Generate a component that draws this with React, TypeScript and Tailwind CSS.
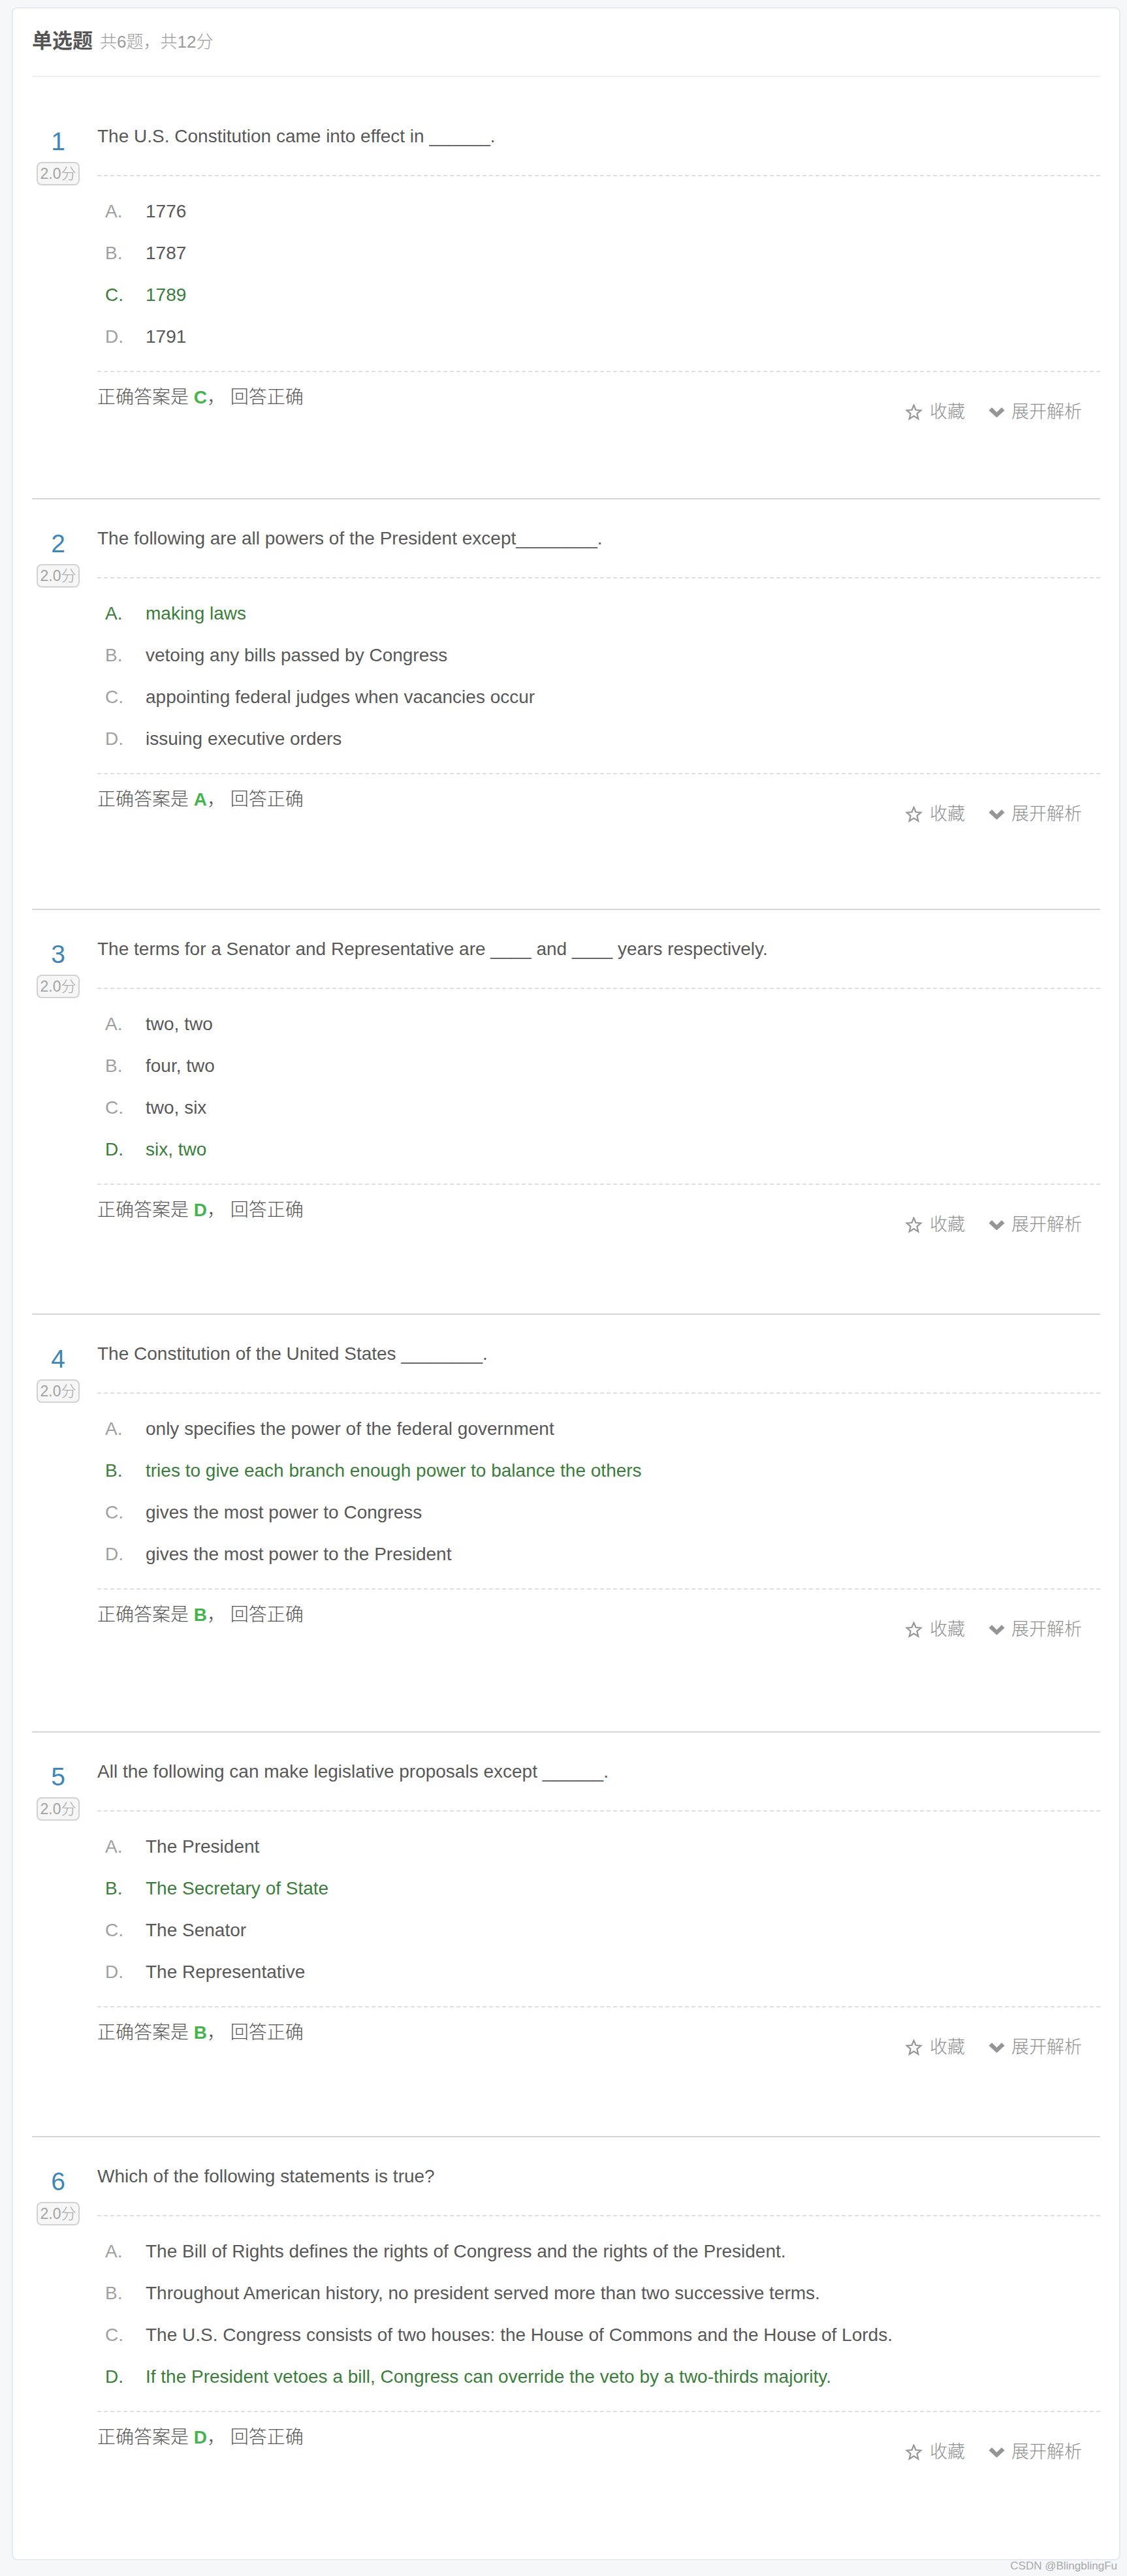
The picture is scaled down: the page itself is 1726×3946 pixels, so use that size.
import React from 'react';

type Question = {
  num: number;
  text: string;
  options: string[];
  correct: number;
  spacing: string;
};

const LETTERS = ['A', 'B', 'C', 'D'];

const questions: Question[] = [
  {
    num: 1,
    text: 'The U.S. Constitution came into effect in ______.',
    options: ['1776', '1787', '1789', '1791'],
    correct: 2,
    spacing: 'pt-[69px] pb-[110px]',
  },
  {
    num: 2,
    text: 'The following are all powers of the President except________.',
    options: [
      'making laws',
      'vetoing any bills passed by Congress',
      'appointing federal judges when vacancies occur',
      'issuing executive orders',
    ],
    correct: 0,
    spacing: 'border-t-2 border-[#d6d6d6] pt-[38px] pb-[123px]',
  },
  {
    num: 3,
    text: 'The terms for a Senator and Representative are ____ and ____ years respectively.',
    options: ['two, two', 'four, two', 'two, six', 'six, two'],
    correct: 3,
    spacing: 'border-t-2 border-[#d6d6d6] pt-[38px] pb-[114px]',
  },
  {
    num: 4,
    text: 'The Constitution of the United States ________.',
    options: [
      'only specifies the power of the federal government',
      'tries to give each branch enough power to balance the others',
      'gives the most power to Congress',
      'gives the most power to the President',
    ],
    correct: 1,
    spacing: 'border-t-2 border-[#d6d6d6] pt-[38px] pb-[134px]',
  },
  {
    num: 5,
    text: 'All the following can make legislative proposals except ______.',
    options: ['The President', 'The Secretary of State', 'The Senator', 'The Representative'],
    correct: 1,
    spacing: 'border-t-2 border-[#d6d6d6] pt-[38px] pb-[114px]',
  },
  {
    num: 6,
    text: 'Which of the following statements is true?',
    options: [
      'The Bill of Rights defines the rights of Congress and the rights of the President.',
      'Throughout American history, no president served more than two successive terms.',
      'The U.S. Congress consists of two houses: the House of Commons and the House of Lords.',
      'If the President vetoes a bill, Congress can override the veto by a two-thirds majority.',
    ],
    correct: 3,
    spacing: 'border-t-2 border-[#d6d6d6] pt-[38px] pb-[142px]',
  },
];

function StarIcon() {
  return (
    <svg width="27" height="25" viewBox="0 0 24 23" fill="none" stroke="#959595" strokeWidth="2" strokeLinejoin="miter">
      <polygon points="12,1.5 14.8,8.3 22,8.8 16.5,13.5 18.3,20.8 12,16.9 5.7,20.8 7.5,13.5 2,8.8 9.2,8.3" />
    </svg>
  );
}

function ChevronIcon() {
  return (
    <svg width="25" height="17" viewBox="0 0 25 17" fill="#959595">
      <path d="M0.8 5.2 L4.6 1.4 Q5 1 5.4 1.4 L12.5 8.5 L19.6 1.4 Q20 1 20.4 1.4 L24.2 5.2 Q24.6 5.6 24.2 6 L12.9 16.3 Q12.5 16.7 12.1 16.3 L0.8 6 Q0.4 5.6 0.8 5.2 Z" />
    </svg>
  );
}

function QuestionBlock({ q }: { q: Question }) {
  return (
    <div className={`flex ${q.spacing}`}>
      <div className="w-[100px] shrink-0">
        <div className="flex w-[80px] flex-col items-center">
          <div className="mt-[8px] h-[44px] text-[39px] leading-[44px] text-[#3d87b8]">{q.num}</div>
          <div className="mt-[9px] flex h-[36px] w-[66px] items-center justify-center rounded-[8px] border-2 border-[#d2d2d2] bg-[#f6f6f6] text-[23px] leading-none text-[#a3a3a3]">
            2.0<span className="font-light">分</span>
          </div>
        </div>
      </div>
      <div className="min-w-0 flex-1">
        <div className="border-b-2 border-dashed border-[#dfdfdf] pb-[37px] text-[28px] leading-[44px] text-[#585858]">
          {q.text}
        </div>
        <div className="border-b-2 border-dashed border-[#dfdfdf] pt-[22px] pb-[20px]">
          {q.options.map((opt, i) => {
            const ok = i === q.correct;
            return (
              <div key={i} className="flex h-[64px] items-center pl-[12px] text-[28px] leading-[64px]">
                <span className={`w-[62px] shrink-0 ${ok ? 'text-[#3b7d3b]' : 'text-[#a0a0a0]'}`}>{LETTERS[i]}.</span>
                <span className={ok ? 'text-[#3b7d3b]' : 'text-[#585858]'}>{opt}</span>
              </div>
            );
          })}
        </div>
        <div className="flex items-start justify-between pt-[17px]">
          <div className="h-[44px] text-[28px] leading-[44px] text-[#555555]">
            <span className="font-light">正确答案是 </span>
            <span className="font-bold text-[#45b44c]">{LETTERS[q.correct]}</span>
            <span className="font-light">， 回答正确</span>
          </div>
          <div className="mt-[22px] flex h-[44px] items-center pr-[28px] text-[27px] font-light text-[#8e8e8e]">
            <StarIcon />
            <span className="ml-[11px]">收藏</span>
            <span className="ml-[36px]">
              <ChevronIcon />
            </span>
            <span className="ml-[10px]">展开解析</span>
          </div>
        </div>
      </div>
    </div>
  );
}

export default function App() {
  return (
    <div className="min-h-screen bg-[#f5f7fa] pt-[11px] font-['Liberation_Sans','Noto_Sans_CJK_SC',sans-serif]">
      <div className="ml-[18px] mr-[10px] rounded-[8px] border-2 border-[#e4eaf0] bg-white px-[29px]">
        <div className="flex items-baseline border-b-2 border-[#efefef] pt-[28px] pb-[30px] leading-[44px]">
          <span className="text-[31px] font-bold text-[#555555]">单选题</span>
          <span className="ml-[11px] text-[26px] text-[#9a9a9a]">
            <span className="font-light">共</span>6<span className="font-light">题，共</span>12<span className="font-light">分</span>
          </span>
        </div>
        {questions.map((q) => (
          <QuestionBlock key={q.num} q={q} />
        ))}
      </div>
      <div className="h-[25px] pr-[15px] text-right text-[17px] leading-[18px] text-[#a8a8a8]">CSDN @BlingblingFu</div>
    </div>
  );
}
